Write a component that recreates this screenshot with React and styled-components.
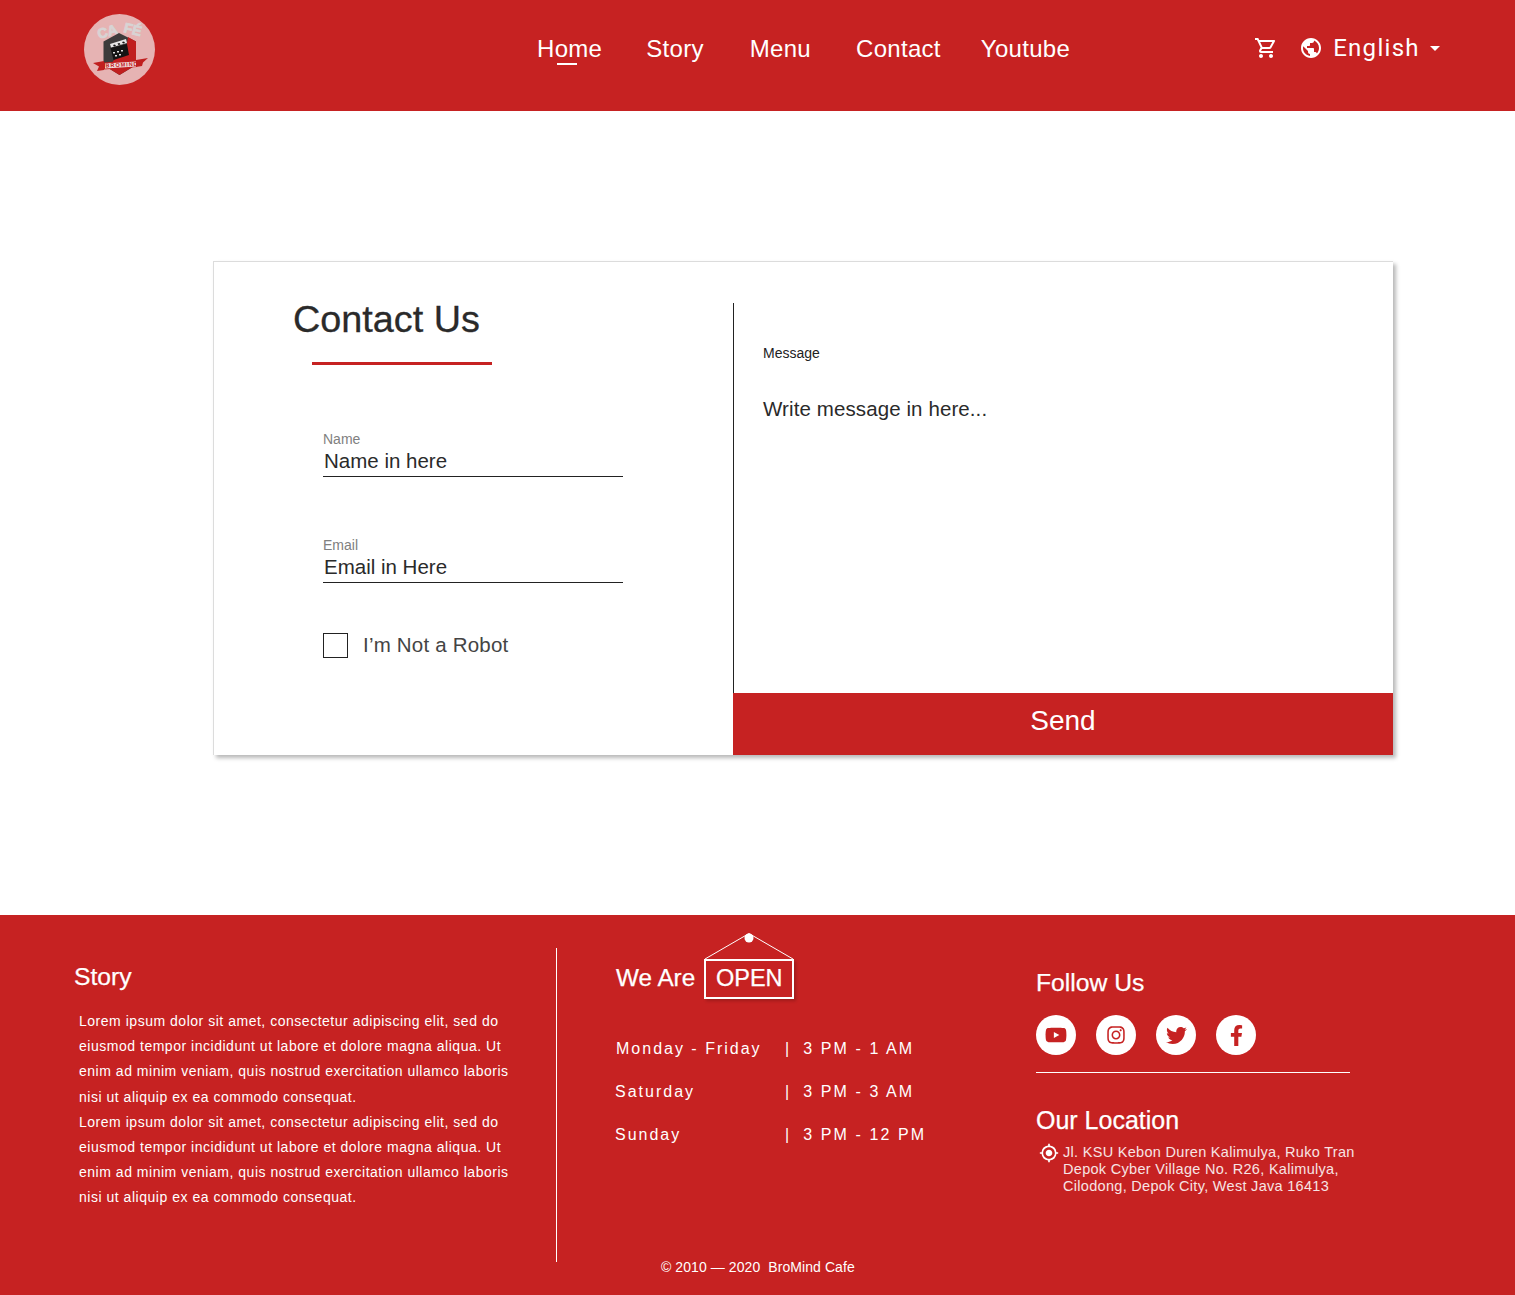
import styled, { createGlobalStyle } from 'styled-components'
import { MdOutlineShoppingCart, MdPublic, MdArrowDropDown, MdGpsFixed } from 'react-icons/md'
import { FaYoutube, FaInstagram, FaTwitter, FaFacebookF } from 'react-icons/fa'

const RED = '#c62222'

const GlobalStyle = createGlobalStyle`
    body {
        margin: 0;
        background: #fff;
        font-family: "Liberation Sans", Arial, sans-serif;
    }
`

function Logo() {
    return (
        <svg width="72" height="72" viewBox="0 0 72 72">
            <circle cx="35.5" cy="35.5" r="35.5" fill="#e6b3b3" />
            <text x="15" y="25" fontSize="14" fontWeight="700" fill="#d8d4d4" stroke="#d8d4d4" strokeWidth="0.8" transform="rotate(-16 15 25)" fontFamily="Liberation Sans">CA</text>
            <text x="39" y="18" fontSize="14" fontWeight="700" fill="#d8d4d4" stroke="#d8d4d4" strokeWidth="0.8" transform="rotate(14 39 18)" fontFamily="Liberation Sans">FÉ</text>
            <path d="M35 19 L52 27.5 L52 51 L35.5 61 L19.5 51 L19.5 27.5 Z" fill="#3d3b3b" />
            <path d="M44 23 L52 27.5 L52 51 L35.5 61 L24 54 L30 46 L42 36 Z" fill="#c01f1f" />
            <path d="M26.5 34 L43 30 L45 41 L29.5 46 Z" fill="#141414" />
            <path d="M26 30 L42 25 L43 29 L27 33.5 Z" fill="#e8e8e8" />
            <path d="M29 31 L31 30.5 L32 32 L30 32.5 Z M33.5 29.5 L35.5 29 L36.5 30.5 L34.5 31 Z M38 28 L40 27.5 L41 29 L39 29.5 Z" fill="#141414" />
            <path d="M29 38 h2 v1.5 h-2 Z M33 37 h2 v1.5 h-2 Z M37 36 h2 v1.5 h-2 Z M31 41 h2 v1.5 h-2 Z M35 40 h2 v1.5 h-2 Z" fill="#ddd" />
            <path d="M9 49 L20 47 L20 56 L13 57 L15 52.5 Z" fill="#c01f1f" />
            <path d="M64 44 L52 46 L52 53 L58 52 L59 48.5 Z" fill="#c01f1f" />
            <path d="M20 48.5 L53 46.5 L53 53 L20 55.5 Z" fill="#c01f1f" />
            <path d="M21 49.5 L52 47.5 L52 52.5 L21 54.5 Z" fill="#f1dede" />
            <text x="21.5" y="53.6" fontSize="5.6" fontWeight="700" fill="#c01f1f" fontFamily="Liberation Sans" letterSpacing="0.9" transform="rotate(-3 21 53)">BROMIND</text>
        </svg>
    )
}

function OpenSign() {
    return (
        <svg width="92" height="26" viewBox="0 0 92 26">
            <path d="M1 26 L45 0.5 L89 26" fill="none" stroke="#fff" strokeWidth="1" />
            <circle cx="45" cy="5" r="4.5" fill="#fff" />
        </svg>
    )
}

const Header = styled.header`
    height: 111px;
    background: ${RED};
    display: flex;
    align-items: flex-start;
    color: #fff;
`
const LogoBox = styled.div`
    margin: 14px 0 0 84px;
    width: 72px;
    height: 72px;
`
const Nav = styled.nav`
    display: flex;
    margin: 35px 0 0 381px;
`
const NavItem = styled.a`
    position: relative;
    margin-left: ${p => p.$gap || 0}px;
    font-size: 24px;
    line-height: 28px;
    letter-spacing: 0.3px;
    white-space: nowrap;
    ${p => p.$active && `
        &::after {
            content: "";
            position: absolute;
            left: 20px;
            bottom: -2px;
            width: 20px;
            height: 2px;
            background: #fff;
        }
    `}
`
const HeaderRight = styled.div`
    display: flex;
    align-items: center;
    margin: 34px 0 0 184px;
    height: 28px;
`
const Lang = styled.span`
    font-family: Roboto, sans-serif;
    font-size: 24px;
    letter-spacing: 1.3px;
    margin-left: 10px;
`
const Globe = styled(MdPublic)`
    margin-left: 21px;
`
const Caret = styled(MdArrowDropDown)`
    margin-left: 3px;
`
const Main = styled.main`
    height: 804px;
    padding: 150px 0 0 213px;
    box-sizing: border-box;
`
const Card = styled.section`
    width: 1180px;
    height: 494px;
    box-sizing: border-box;
    background: #fff;
    border: 1px solid #dcdcdc;
    border-right: none;
    border-bottom: none;
    box-shadow: 3px 3px 4px rgba(0,0,0,0.28);
    display: flex;
`
const LeftCol = styled.div`
    width: 519px;
    flex: none;
`
const Title = styled.h1`
    margin: 37px 0 0 79px;
    font-size: 37.8px;
    line-height: 41px;
    font-weight: 400;
    color: #2a2a2a;
    -webkit-text-stroke: 0.3px #2a2a2a;
`
const TitleRule = styled.div`
    width: 180px;
    height: 3px;
    background: ${RED};
    margin: 22px 0 0 98px;
`
const Field = styled.div`
    width: 300px;
    margin: ${p => p.$top}px 0 0 109px;
    border-bottom: 1px solid #222;
`
const FieldLabel = styled.div`
    font-size: 14px;
    line-height: 16px;
    color: #808080;
`
const FieldValue = styled.div`
    font-size: 20.5px;
    line-height: 24px;
    color: #2a2a2a;
    padding: 2px 0 3px 1px;
`
const RobotRow = styled.div`
    display: flex;
    align-items: center;
    margin: 50px 0 0 109px;
`
const CheckBox = styled.div`
    width: 25px;
    height: 25px;
    box-sizing: border-box;
    border: 1px solid #222;
`
const RobotLabel = styled.span`
    margin: 0 0 2px 15px;
    font-size: 20.5px;
    line-height: 23px;
    color: #444;
    letter-spacing: 0.2px;
`
const RightCol = styled.div`
    flex: 1;
    display: flex;
    flex-direction: column;
    margin-top: 41px;
    border-left: 1px solid #222;
`
const MessageBox = styled.div`
    flex: 1;
    padding: 42px 0 0 29px;
`
const MessageLabel = styled.div`
    font-size: 14px;
    line-height: 16px;
    color: #222;
`
const MessageValue = styled.div`
    margin-top: 36px;
    font-size: 20.5px;
    line-height: 24px;
    color: #2a2a2a;
    letter-spacing: 0.1px;
`
const SendButton = styled.button`
    height: 62px;
    margin-left: -1px;
    border: none;
    padding: 0 0 6px;
    background: ${RED};
    color: #fff;
    font: 400 28px "Liberation Sans", Arial, sans-serif;
`
const Footer = styled.footer`
    height: 380px;
    background: ${RED};
    color: #fff;
    display: flex;
    position: relative;
`
const StoryCol = styled.div`
    width: 483px;
    height: 314px;
    margin: 33px 0 0 74px;
    box-sizing: border-box;
    border-right: 1px solid #fff;
    flex: none;
`
const FooterHeading = styled.h3`
    margin: 0;
    font-size: 24.7px;
    line-height: 28px;
    font-weight: 400;
    -webkit-text-stroke: 0.25px #fff;
`
const StoryHeading = styled(FooterHeading)`
    margin-top: 15px;
`
const StoryText = styled.p`
    margin: 18px 0 0 5px;
    width: 440px;
    font-size: 14px;
    line-height: 25.2px;
    letter-spacing: 0.52px;
`
const HoursCol = styled.div`
    width: 479px;
    flex: none;
    padding: 18px 0 0 59px;
    box-sizing: border-box;
`
const OpenRow = styled.div`
    display: flex;
    align-items: flex-end;
`
const SignBox = styled.div`
    margin-left: 9px;
    display: flex;
    flex-direction: column;
`
const SignTag = styled.div`
    height: 26px;
`
const OpenBadge = styled.div`
    width: 90px;
    height: 40px;
    box-sizing: border-box;
    border: 2px solid #fff;
    box-shadow: 2px 2px 3px rgba(0,0,0,0.2);
    font-size: 23.5px;
    line-height: 35px;
    text-align: center;
    -webkit-text-stroke: 0.25px #fff;
`
const WeAre = styled(FooterHeading)`
    font-size: 24.3px;
    line-height: 36px;
    padding-bottom: 3px;
`
const HoursList = styled.div`
    margin-top: 28px;
`
const HoursRow = styled.div`
    display: flex;
    font-size: 16px;
    line-height: 43px;
    letter-spacing: 2px;
    white-space: nowrap;
`
const Day = styled.span`
    width: 169px;
    margin-left: ${p => p.$shift || 0}px;
    margin-right: ${p => -(p.$shift || 0)}px;
`
const Pipe = styled.span`
    margin-right: 12px;
`
const Time = styled.span`
    letter-spacing: 2.1px;
`
const LocationCol = styled.div`
    width: 330px;
    flex: none;
    padding: 54px 0 0 0;
`
const SocialRow = styled.div`
    display: flex;
    gap: 20px;
    margin-top: 18px;
`
const SocialCircle = styled.a`
    width: 40px;
    height: 40px;
    border-radius: 50%;
    background: #fff;
    color: ${RED};
    display: flex;
    align-items: center;
    justify-content: center;
`
const Divider = styled.div`
    width: 314px;
    height: 1px;
    background: #fff;
    margin-top: 17px;
`
const LocationHeading = styled(FooterHeading)`
    font-size: 25px;
    margin-top: 33px;
`
const Address = styled.div`
    display: flex;
    margin: 10px 0 0 3px;
`
const AddressIcon = styled(MdGpsFixed)`
    flex: none;
    margin: -1px 4px 0 0;
`
const AddressText = styled.div`
    font-size: 14.5px;
    line-height: 17px;
    letter-spacing: 0.3px;
    white-space: nowrap;
    color: #f7e4e4;
`
const Copyright = styled.div`
    position: absolute;
    left: 661px;
    top: 344px;
    font-size: 14px;
    line-height: 16px;
    letter-spacing: 0.08px;
    white-space: pre;
`

const story = 'Lorem ipsum dolor sit amet, consectetur adipiscing elit, sed do eiusmod tempor incididunt ut labore et dolore magna aliqua. Ut enim ad minim veniam, quis nostrud exercitation ullamco laboris nisi ut aliquip ex ea commodo consequat.'
const hours = [
    { day: 'Monday - Friday', time: '3 PM - 1 AM', shift: 0 },
    { day: 'Saturday', time: '3 PM - 3 AM', shift: -1 },
    { day: 'Sunday', time: '3 PM - 12 PM', shift: -1 },
]

export default function App() {
    return (
        <>
            <GlobalStyle />
            <Header>
                <LogoBox><Logo /></LogoBox>
                <Nav>
                    <NavItem $active>Home</NavItem>
                    <NavItem $gap={44}>Story</NavItem>
                    <NavItem $gap={46}>Menu</NavItem>
                    <NavItem $gap={45}>Contact</NavItem>
                    <NavItem $gap={40}>Youtube</NavItem>
                </Nav>
                <HeaderRight>
                    <MdOutlineShoppingCart size={24} />
                    <Globe size={24} />
                    <Lang>English</Lang>
                    <Caret size={24} />
                </HeaderRight>
            </Header>
            <Main>
                <Card>
                    <LeftCol>
                        <Title>Contact Us</Title>
                        <TitleRule />
                        <Field $top={66}>
                            <FieldLabel>Name</FieldLabel>
                            <FieldValue>Name in here</FieldValue>
                        </Field>
                        <Field $top={60}>
                            <FieldLabel>Email</FieldLabel>
                            <FieldValue>Email in Here</FieldValue>
                        </Field>
                        <RobotRow>
                            <CheckBox />
                            <RobotLabel>I’m Not a Robot</RobotLabel>
                        </RobotRow>
                    </LeftCol>
                    <RightCol>
                        <MessageBox>
                            <MessageLabel>Message</MessageLabel>
                            <MessageValue>Write message in here...</MessageValue>
                        </MessageBox>
                        <SendButton>Send</SendButton>
                    </RightCol>
                </Card>
            </Main>
            <Footer>
                <StoryCol>
                    <StoryHeading>Story</StoryHeading>
                    <StoryText>{story}<br />{story}</StoryText>
                </StoryCol>
                <HoursCol>
                    <OpenRow>
                        <WeAre>We Are</WeAre>
                        <SignBox>
                            <SignTag><OpenSign /></SignTag>
                            <OpenBadge>OPEN</OpenBadge>
                        </SignBox>
                    </OpenRow>
                    <HoursList>
                        {hours.map(h => (
                            <HoursRow key={h.day}>
                                <Day $shift={h.shift}>{h.day}</Day>
                                <Pipe>|</Pipe>
                                <Time>{h.time}</Time>
                            </HoursRow>
                        ))}
                    </HoursList>
                </HoursCol>
                <LocationCol>
                    <FooterHeading>Follow Us</FooterHeading>
                    <SocialRow>
                        <SocialCircle><FaYoutube size={22} /></SocialCircle>
                        <SocialCircle><FaInstagram size={20} /></SocialCircle>
                        <SocialCircle><FaTwitter size={21} /></SocialCircle>
                        <SocialCircle><FaFacebookF size={21} /></SocialCircle>
                    </SocialRow>
                    <Divider />
                    <LocationHeading>Our Location</LocationHeading>
                    <Address>
                        <AddressIcon size={20} />
                        <AddressText>
                            Jl. KSU Kebon Duren Kalimulya, Ruko Tran<br />
                            Depok Cyber Village No. R26, Kalimulya,<br />
                            Cilodong, Depok City, West Java 16413
                        </AddressText>
                    </Address>
                </LocationCol>
                <Copyright>© 2010 — 2020  BroMind Cafe</Copyright>
            </Footer>
        </>
    )
}
